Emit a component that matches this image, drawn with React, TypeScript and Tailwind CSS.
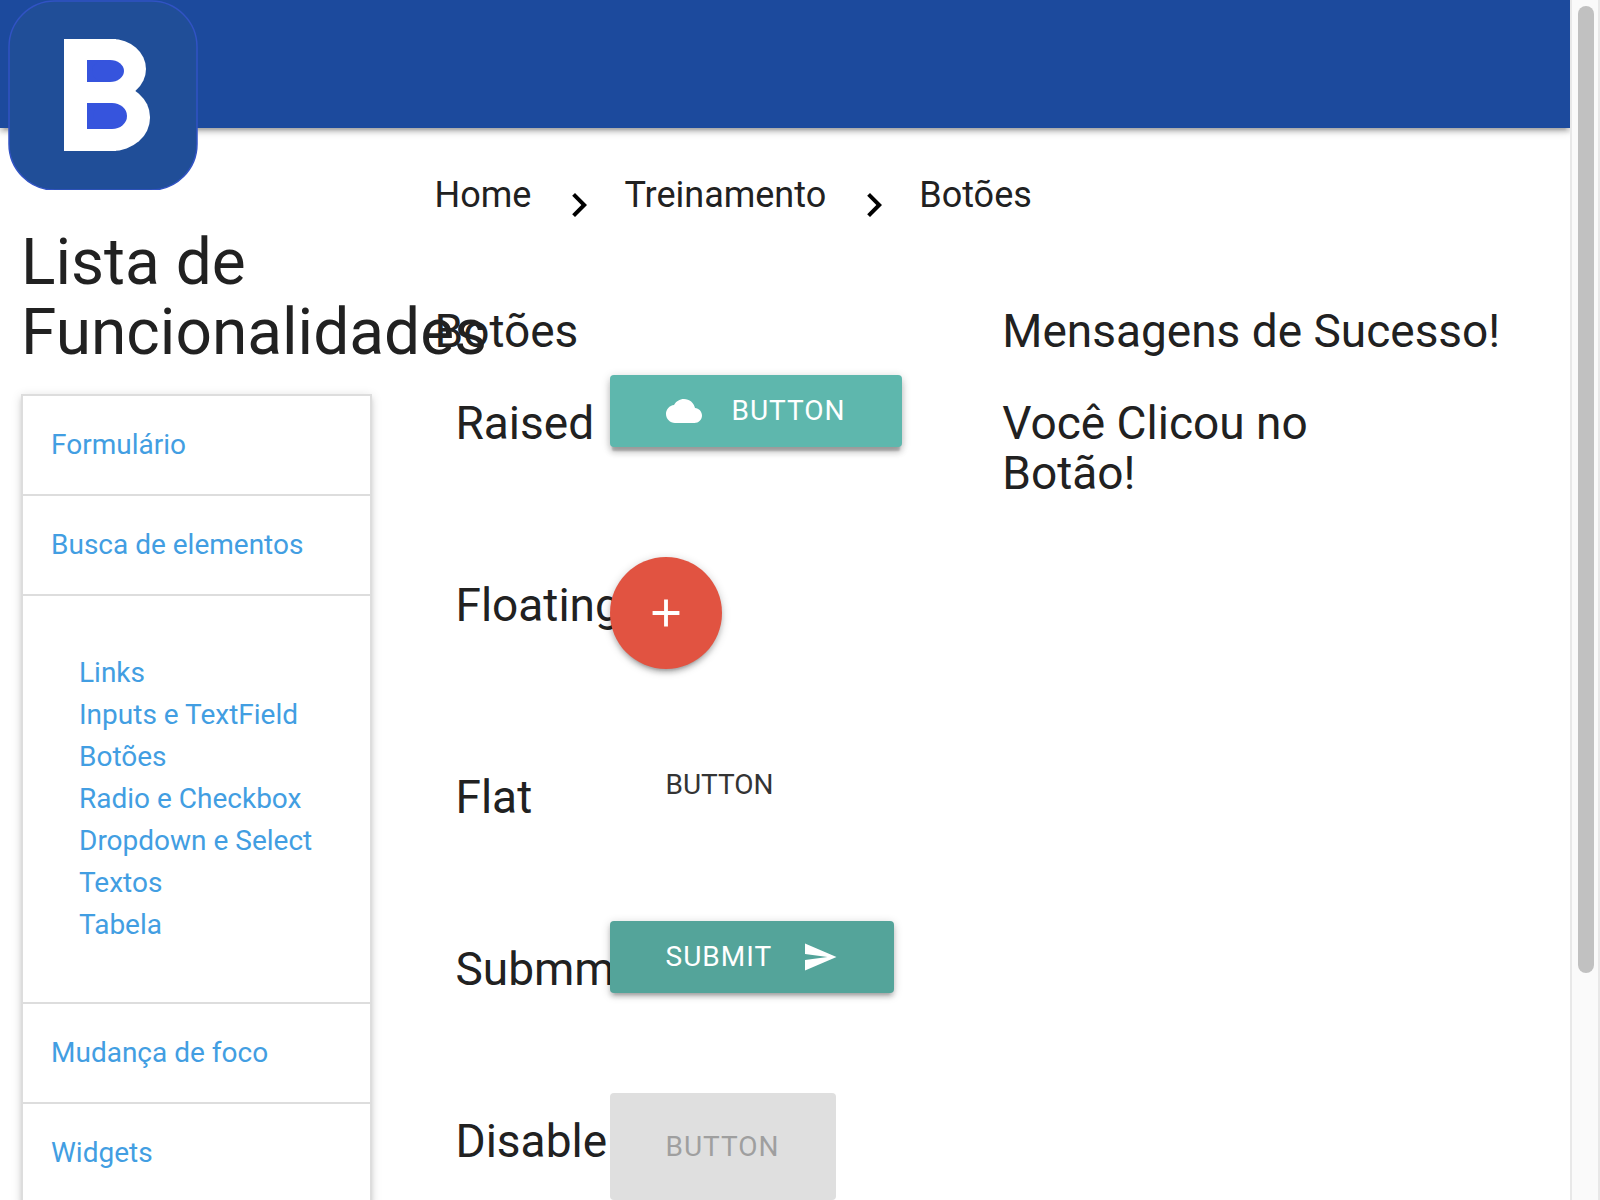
import type { ReactNode } from "react";

function Icon({ d, className }: { d: string; className: string }) {
  return (
    <svg viewBox="0 0 24 24" fill="currentColor" aria-hidden="true" className={className}>
      <path d={d} />
    </svg>
  );
}

const CHEVRON = "M10 6L8.59 7.41 13.17 12l-4.58 4.59L10 18l6-6z";
const CLOUD =
  "M19.35 10.04C18.67 6.59 15.64 4 12 4 9.11 4 6.6 5.64 5.35 8.04 2.34 8.36 0 10.91 0 14c0 3.31 2.69 6 6 6h13c2.76 0 5-2.24 5-5 0-2.64-2.05-4.78-4.65-4.96z";
const PLUS = "M19 13h-6v6h-2v-6H5v-2h6V5h2v6h6v2z";
const SEND = "M2.01 21L23 12 2.01 3 2 10l15 2-15 2z";

function Logo() {
  return (
    <svg viewBox="0 0 190 190" role="img" aria-label="Início" className="size-[190px]">
      <rect x="1" y="1" width="188" height="189" rx="46" fill="#204e98" stroke="#3153c4" strokeWidth="1.5" />
      <g fill="#fff">
        <rect x="56" y="39" width="52" height="112" />
        <rect x="70" y="39" width="68" height="60" rx="34" ry="30" />
        <rect x="66" y="84" width="76" height="67" rx="38" ry="33" />
      </g>
      <g fill="#3654dd">
        <rect x="79" y="60" width="20" height="22" />
        <rect x="84" y="60" width="32" height="22" rx="14" ry="11" />
        <rect x="79" y="103" width="22" height="26" />
        <rect x="85" y="103" width="34" height="26" rx="15" ry="13" />
      </g>
    </svg>
  );
}

const links = [
  "Links",
  "Inputs e TextField",
  "Botões",
  "Radio e Checkbox",
  "Dropdown e Select",
  "Textos",
  "Tabela",
];

function MenuItem({ children }: { children: ReactNode }) {
  return (
    <li className="border-b-2 border-[#dddddd]">
      <a href="#" className="block p-7">
        {children}
      </a>
    </li>
  );
}

function Row({ label, className, children }: { label: string; className: string; children: ReactNode }) {
  return (
    <div className={`flex items-start pl-[21px] ${className}`}>
      <h5 className="mt-[23px] w-[154px] shrink-0 whitespace-nowrap text-[46px] leading-[50px]">{label}</h5>
      <div className="relative">{children}</div>
    </div>
  );
}

export default function App() {
  return (
    <div className="flex h-screen overflow-hidden bg-white font-[Roboto,sans-serif] text-[28px] leading-[42px] text-[#212121]">
      <div className="h-full min-w-0 flex-1 overflow-hidden">
        <header className="relative h-32 bg-[#1c4a9d] shadow-[0_4px_4px_0_rgba(0,0,0,0.14),0_6px_2px_-4px_rgba(0,0,0,0.12),0_2px_10px_0_rgba(0,0,0,0.2)]">
          <a href="#" className="absolute left-2 top-0">
            <Logo />
          </a>
        </header>
        <div className="flex">
          <aside className="w-1/4 shrink-0 px-[21px] pt-[100px]">
            <h4 className="mb-[26px] text-[64px] leading-[70px]">
              Lista de
              <br />
              Funcionalidades
            </h4>
            <ul className="border-2 border-[#dddddd] text-[#429ee2] shadow-[0_4px_4px_0_rgba(0,0,0,0.10),0_2px_10px_0_rgba(0,0,0,0.14)]">
              <MenuItem>Formulário</MenuItem>
              <MenuItem>Busca de elementos</MenuItem>
              <li className="border-b-2 border-[#dddddd] p-14">
                <ul className="whitespace-nowrap">
                  {links.map((l) => (
                    <li key={l}>
                      <a href="#">{l}</a>
                    </li>
                  ))}
                </ul>
              </li>
              <MenuItem>Mudança de foco</MenuItem>
              <MenuItem>Widgets</MenuItem>
            </ul>
          </aside>
          <main className="min-w-0 flex-1 px-[21px]">
            <nav className="flex items-start px-[21px] pt-[46px] text-[36px] leading-[42px]">
              <a href="#">Home</a>
              <Icon d={CHEVRON} className="ml-6 mr-[21px] mt-[7px] size-12 text-black" />
              <a href="#">Treinamento</a>
              <Icon d={CHEVRON} className="ml-6 mr-[21px] mt-[7px] size-12 text-black" />
              <a href="#">Botões</a>
            </nav>
            <div className="mt-[77px] grid grid-cols-2">
              <section className="px-[21px]">
                <h5 className="mb-[19px] text-[46px] leading-[50px]">Botões</h5>
                <Row label="Raised" className="mb-[109px]">
                  <button className="flex h-[72px] items-center gap-[30px] rounded bg-[#5eb7ad] px-14 text-white tracking-[1px] shadow-[0_6px_6px_0_rgba(0,0,0,0.14),0_6px_2px_-2px_rgba(0,0,0,0.2),0_2px_10px_0_rgba(0,0,0,0.2)]">
                    <Icon d={CLOUD} className="size-9" />
                    BUTTON
                  </button>
                </Row>
                <Row label="Floating" className="mb-20">
                  <button
                    aria-label="Adicionar"
                    className="flex size-28 items-center justify-center rounded-full bg-[#e15341] text-white shadow-[0_4px_4px_0_rgba(0,0,0,0.14),0_6px_2px_-4px_rgba(0,0,0,0.12),0_2px_10px_0_rgba(0,0,0,0.2)]"
                  >
                    <Icon d={PLUS} className="size-[46px]" />
                  </button>
                </Row>
                <Row label="Flat" className="mb-[99px]">
                  <button className="h-[72px] px-14 text-[#343434]">BUTTON</button>
                </Row>
                <Row label="Submmit" className="mb-[99px]">
                  <button
                    type="submit"
                    className="flex h-[72px] items-center gap-[30px] rounded bg-[#54a49a] px-14 text-white tracking-[1px] shadow-[0_4px_4px_0_rgba(0,0,0,0.14),0_6px_2px_-4px_rgba(0,0,0,0.12),0_2px_10px_0_rgba(0,0,0,0.2)]"
                  >
                    SUBMIT
                    <Icon d={SEND} className="size-9" />
                  </button>
                </Row>
                <Row label="Disable" className="">
                  <button disabled className="h-[107px] rounded bg-[#dfdfdf] px-14 text-[#9f9f9f] tracking-[1px]">
                    BUTTON
                  </button>
                </Row>
              </section>
              <section className="px-[21px]">
                <h5 className="mb-[42px] whitespace-nowrap text-[46px] leading-[50px]">Mensagens de Sucesso!</h5>
                <h5 className="w-3/4 text-[46px] leading-[50px]">Você Clicou no Botão!</h5>
              </section>
            </div>
          </main>
        </div>
      </div>
      <div className="h-full w-[30px] shrink-0 border-x-2 border-[#e8e8e8] bg-[#fafafa] px-1.5 pt-1.5">
        <div className="h-[81%] w-4 rounded-full bg-[#c1c1c1]" />
      </div>
    </div>
  );
}
